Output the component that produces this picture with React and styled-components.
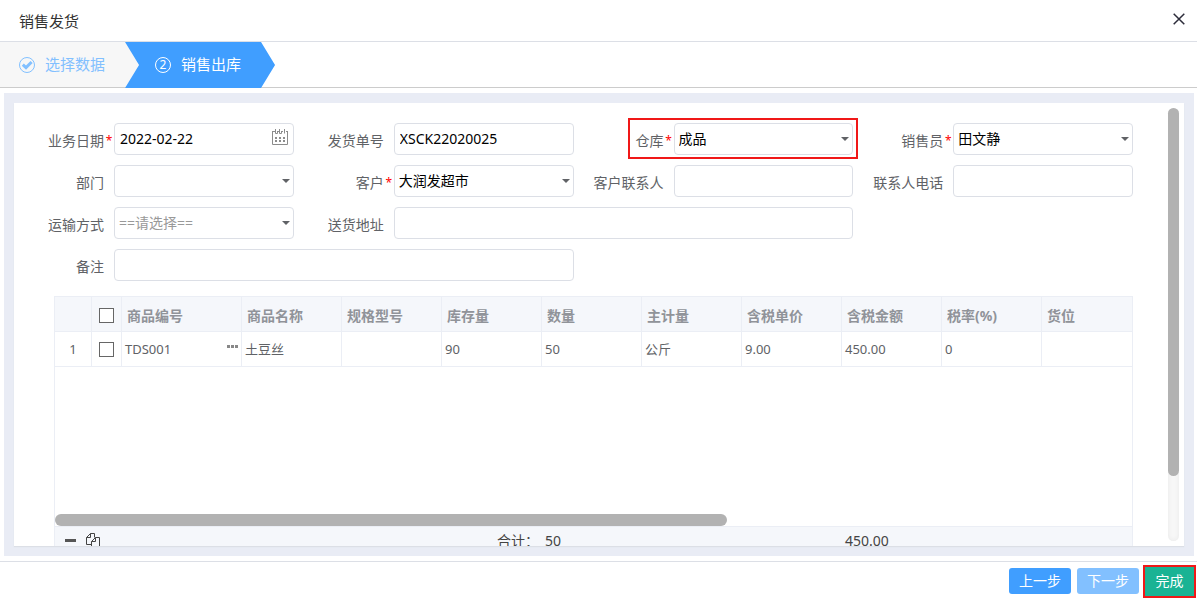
import styled, { createGlobalStyle } from "styled-components";

const columns = [
    { key: "code", title: "商品编号", width: 120 },
    { key: "name", title: "商品名称", width: 100 },
    { key: "spec", title: "规格型号", width: 100 },
    { key: "stock", title: "库存量", width: 100 },
    { key: "amount", title: "数量", width: 100 },
    { key: "unit", title: "主计量", width: 100 },
    { key: "price", title: "含税单价", width: 100 },
    { key: "total", title: "含税金额", width: 100 },
    { key: "rate", title: "税率(%)", width: 100 },
    { key: "slot", title: "货位" },
];

const rows = [
    { code: "TDS001", name: "土豆丝", spec: "", stock: "90", amount: "50", unit: "公斤", price: "9.00", total: "450.00", rate: "0", slot: "" },
];

function CheckIcon () {
    return (
        <svg width="16" height="16" viewBox="0 0 16 16" fill="none" stroke="currentColor">
            <circle cx="8" cy="8" r="7.5" />
            <path d="M3.8 7.6l3.2 3 5.6-5.6" strokeWidth="3" />
        </svg>
    );
}

function CalendarIcon () {
    return (
        <svg width="16" height="16" viewBox="0 0 16 16" fill="none" stroke="#8c8c8c">
            <path d="M.5 2v13.5h15V2M0 2.5h3m3 0h1m3 0h1m3 0h2M3.5 0v4.5h2V2M7.5 0v4.5h2V2M12.5 0v4.5" />
            <path d="M3 9h10M3 12h10" strokeWidth="2" strokeDasharray="2 2" />
        </svg>
    );
}

function CopyIcon () {
    return (
        <svg width="14" height="16" viewBox="0 0 14 16" fill="none" stroke="#444">
            <path d="M5.5 11.5h-5v-7l4-4h4v4M.5 4.5h4v-4" />
            <path d="M5.5 15.5v-7l4-4h4v11zM5.5 8.5h4v-4" />
        </svg>
    );
}

function Field ({ id, label, required, span, marked, children }) {
    return (
        <StyledField $span={span}>
            <Label htmlFor={id}>{label}<Mark>{required ? "*" : ""}</Mark></Label>
            <Control>{children}</Control>
            {marked && <Highlight />}
        </StyledField>
    );
}

function SelectBox ({ id, value, muted }) {
    return (
        <>
            <Select id={id} defaultValue={value} $muted={muted}>
                <option value={value}>{value}</option>
            </Select>
            <Caret />
        </>
    );
}

function Columns () {
    return (
        <colgroup>
            <Col $width={37} />
            <Col $width={30} />
            {columns.map(col => <Col key={col.key} $width={col.width} />)}
        </colgroup>
    );
}

function App () {
    return (
        <Dialog>
            <GlobalStyle />
            <TitleBar>
                <Title>销售发货</Title>
                <CloseButton aria-label="关闭">
                    <svg width="12" height="12" viewBox="0 0 12 12" stroke="#2c2c3a" strokeWidth="1.5">
                        <path d="M.7.7l10.6 10.6M11.3.7L.7 11.3" />
                    </svg>
                </CloseButton>
            </TitleBar>
            <Steps>
                <Step><CheckIcon /><StepName>选择数据</StepName></Step>
                <Step $active><StepNumber>2</StepNumber><StepName>销售出库</StepName></Step>
            </Steps>
            <Frame>
                <Panel>
                    <Content>
                        <Form>
                            <Field id="date" label="业务日期" required>
                                <Input id="date" defaultValue="2022-02-22" />
                                <InputIcon><CalendarIcon /></InputIcon>
                            </Field>
                            <Field id="number" label="发货单号">
                                <Input id="number" defaultValue="XSCK22020025" />
                            </Field>
                            <Field id="store" label="仓库" required marked>
                                <SelectBox id="store" value="成品" />
                            </Field>
                            <Field id="seller" label="销售员" required>
                                <SelectBox id="seller" value="田文静" />
                            </Field>
                            <Field id="dept" label="部门">
                                <SelectBox id="dept" value="" />
                            </Field>
                            <Field id="customer" label="客户" required>
                                <SelectBox id="customer" value="大润发超市" />
                            </Field>
                            <Field id="contact" label="客户联系人"><Input id="contact" /></Field>
                            <Field id="phone" label="联系人电话"><Input id="phone" /></Field>
                            <Field id="transport" label="运输方式">
                                <SelectBox id="transport" value="==请选择==" muted />
                            </Field>
                            <Field id="address" label="送货地址" span={2}><Input id="address" /></Field>
                            <Field id="remark" label="备注" span={2}><Input id="remark" /></Field>
                        </Form>
                        <Grid>
                            <GridBody>
                                <Table>
                                    <Columns />
                                    <thead>
                                        <tr>
                                            <HeadCell />
                                            <HeadCell $center><Checkbox aria-label="全选" /></HeadCell>
                                            {columns.map(col => <HeadCell key={col.key}>{col.title}</HeadCell>)}
                                        </tr>
                                    </thead>
                                    <tbody>
                                        {rows.map((row, i) => (
                                            <tr key={row.code}>
                                                <Cell $center>{i + 1}</Cell>
                                                <Cell $center><Checkbox aria-label={row.name} /></Cell>
                                                {columns.map(col => (
                                                    <Cell key={col.key}>
                                                        {col.key === "code"
                                                            ? <Code>{row.code}<MoreButton aria-label="更多"><Dots /></MoreButton></Code>
                                                            : row[col.key]}
                                                    </Cell>
                                                ))}
                                            </tr>
                                        ))}
                                    </tbody>
                                </Table>
                            </GridBody>
                            <HorizontalThumb />
                            <Summary>
                                <Columns />
                                <tbody>
                                    <tr>
                                        <SumCell colSpan={2}>
                                            <Tools>
                                                <ToolButton aria-label="删除行"><Minus /></ToolButton>
                                                <ToolButton aria-label="复制行"><CopyIcon /></ToolButton>
                                            </Tools>
                                        </SumCell>
                                        <SumCell colSpan={3} />
                                        <SumCell $right>合计：</SumCell>
                                        <SumCell>50</SumCell>
                                        <SumCell colSpan={2} />
                                        <SumCell>450.00</SumCell>
                                        <SumCell colSpan={2} />
                                    </tr>
                                </tbody>
                            </Summary>
                        </Grid>
                    </Content>
                    <Track><Thumb /></Track>
                </Panel>
            </Frame>
            <Footer>
                <Button>上一步</Button>
                <Button disabled>下一步</Button>
                <DoneButton>完成</DoneButton>
            </Footer>
        </Dialog>
    );
}

export default App;

const GlobalStyle = createGlobalStyle`
  * {
    box-sizing: border-box;
  }
  body {
    margin: 0;
    background: #fff;
  }
  body, input, select, button {
    font-family: "Noto Sans", "Noto Sans CJK SC", sans-serif;
    font-size: 14px;
  }
  button {
    padding: 0;
    border: 0;
    background: none;
    cursor: pointer;
  }
  svg {
    display: block;
    flex: none;
  }
`;

const Dialog = styled.div`
  display: flex;
  flex-direction: column;
  height: 100vh;
  overflow: hidden;
`;

const TitleBar = styled.header`
  display: flex;
  flex: none;
  align-items: center;
  justify-content: space-between;
  height: 42px;
  padding: 0 12px 0 19px;
  border-bottom: 1px solid #dcdfe6;
`;

const Title = styled.h1`
  margin: 0;
  color: #333;
  font-size: 15px;
  font-weight: 400;
  line-height: 20px;
`;

const CloseButton = styled.button`
  margin-bottom: 4px;
`;

const Steps = styled.nav`
  display: flex;
  flex: none;
  height: 46px;
  background: linear-gradient(#ccc, #ccc) bottom / 100% 1px no-repeat;
`;

const Step = styled.div`
  display: flex;
  align-items: center;
  gap: 10px;
  padding: 0 34px 0 19px;
  background: linear-gradient(#ccc, #ccc) bottom / 100% 1px no-repeat #f7f7f7;
  color: #82c0ff;
  font-size: 15px;
  line-height: 20px;
  clip-path: polygon(0 0, calc(100% - 14px) 0, 100% 50%, calc(100% - 14px) 100%, 0 100%);

  ${({ $active }) => $active && `
    margin-left: -14px;
    padding-left: 30px;
    background: #409eff;
    color: #fff;
    clip-path: polygon(0 0, calc(100% - 14px) 0, 100% 50%, calc(100% - 14px) 100%, 0 100%, 14px 50%);
  `}
`;

const StepName = styled.span`
  padding-bottom: 2px;
`;

const StepNumber = styled.span`
  width: 16px;
  height: 16px;
  border: 1px solid #fff;
  border-radius: 50%;
  font-size: 12px;
  line-height: 14px;
  text-align: center;
`;

const Frame = styled.main`
  display: flex;
  flex: 1;
  min-height: 0;
  margin: 5px 3px 5px 4px;
  padding: 10px;
  background: #e9ecf5;
`;

const Panel = styled.div`
  display: flex;
  flex: 1;
  overflow: hidden;
  background: #fff;
  box-shadow: 0 1px 1px #dcdfe6;
`;

const Content = styled.div`
  flex: 1;
  padding: 20px 35px 0 0;
`;

const Form = styled.form`
  display: grid;
  grid-template-columns: repeat(4, minmax(0, 1fr));
  row-gap: 10px;
`;

const StyledField = styled.div`
  display: flex;
  position: relative;
  grid-column: span ${({ $span }) => $span || 1};
  height: 32px;
`;

const Label = styled.label`
  display: flex;
  flex: none;
  justify-content: flex-end;
  width: 100px;
  color: #606266;
  line-height: 36px;
  white-space: nowrap;
`;

const Mark = styled.span`
  width: 10px;
  color: #f00;
  font-size: 12px;
  text-align: center;
`;

const Control = styled.div`
  flex: 1;
  position: relative;
`;

const Input = styled.input`
  display: block;
  width: 100%;
  height: 32px;
  padding: 0 5px 2px;
  border: 1px solid #dcdfe6;
  border-radius: 4px;
  background: #fff;
  color: #000;
  outline: none;
`;

const InputIcon = styled.span`
  position: absolute;
  top: 6px;
  right: 6px;
`;

const Select = styled.select`
  display: block;
  width: 100%;
  height: 32px;
  padding: 0 20px 2px 4px;
  border: 1px solid #dcdfe6;
  border-radius: 4px;
  appearance: none;
  background: #fff;
  color: ${({ $muted }) => $muted ? "#999" : "#000"};
  outline: none;
`;

const Caret = styled.span`
  position: absolute;
  top: 14px;
  right: 4px;
  border: 4px solid transparent;
  border-top-color: #606266;
  border-bottom: 0;
  pointer-events: none;
`;

const Highlight = styled.div`
  position: absolute;
  inset: -5px -5px -4px 54px;
  border: 2px solid #f01818;
  pointer-events: none;
`;

const Grid = styled.section`
  margin: 15px 0 0 40px;
  border: 1px solid #ebeef5;
`;

const GridBody = styled.div`
  height: 217px;
`;

const Table = styled.table`
  width: 100%;
  border-collapse: separate;
  border-spacing: 0;
  table-layout: fixed;
`;

const Col = styled.col`
  width: ${({ $width }) => $width ? `${$width}px` : "auto"};
`;

const HeadCell = styled.th`
  height: 35px;
  padding: 3px 5px 0;
  border-right: 1px solid #ebeef5;
  border-bottom: 1px solid #ebeef5;
  background: #f5f7fb;
  color: #909399;
  font-weight: 700;
  line-height: 20px;
  text-align: ${({ $center }) => $center ? "center" : "left"};

  &:last-child {
    border-right: 0;
  }
`;

const Cell = styled.td`
  height: 35px;
  padding: 0 3px;
  border-right: 1px solid #ebeef5;
  border-bottom: 1px solid #ebeef5;
  color: #606266;
  font-size: 13px;
  line-height: 20px;
  text-align: ${({ $center }) => $center ? "center" : "left"};

  &:last-child {
    border-right: 0;
  }
`;

const Checkbox = styled.input.attrs({ type: "checkbox" })`
  display: block;
  width: 15px;
  height: 15px;
  margin: 0 auto;
  border: 1px solid #666;
  appearance: none;
  background: #fff;
`;

const Code = styled.div`
  display: flex;
  align-items: center;
  justify-content: space-between;
`;

const MoreButton = styled.button`
  height: 8px;
`;

const Dots = styled.span`
  display: block;
  width: 11px;
  height: 3px;
  margin-bottom: 5px;
  background: repeating-linear-gradient(90deg, #888 0 3px, transparent 3px 4px);
`;

const HorizontalThumb = styled.div`
  width: 672px;
  max-width: 100%;
  height: 12px;
  border-radius: 6px;
  background: #b2b2b2;
`;

const Summary = styled(Table)`
  border-top: 1px solid #ebeef5;
  background: #f5f7fb;
`;

const SumCell = styled.td`
  height: 27px;
  padding: 0 3px;
  color: #444;
  line-height: 20px;
  text-align: ${({ $right }) => $right ? "right" : "left"};
`;

const Tools = styled.div`
  display: flex;
  align-items: center;
  gap: 10px;
  padding-left: 7px;
`;

const ToolButton = styled.button`
  flex: none;
`;

const Minus = styled.span`
  display: block;
  width: 11px;
  height: 3px;
  background: #555;
`;

const Track = styled.div`
  flex: none;
  width: 11px;
  margin: 5px 5px 5px 0;
  border-radius: 6px;
  background: #f7f7f7;
  box-shadow: inset 0 0 4px #e8e8e8;
`;

const Thumb = styled.div`
  height: 85%;
  border-radius: 6px;
  background: #b2b2b2;
`;

const Footer = styled.footer`
  display: flex;
  flex: none;
  align-items: center;
  justify-content: flex-end;
  gap: 6px;
  height: 39px;
  padding-right: 3px;
  border-top: 1px solid #dcdfe6;
`;

const Button = styled.button`
  height: 26px;
  padding: 0 10px;
  border-radius: 3px;
  background: #409eff;
  color: #fff;
  line-height: 20px;

  &:disabled {
    background: #82c0ff;
  }
`;

const DoneButton = styled(Button)`
  min-width: 49px;
  height: 29px;
  border-radius: 0;
  background: #1ab394;
  outline: 2px solid #f01818;
`;
